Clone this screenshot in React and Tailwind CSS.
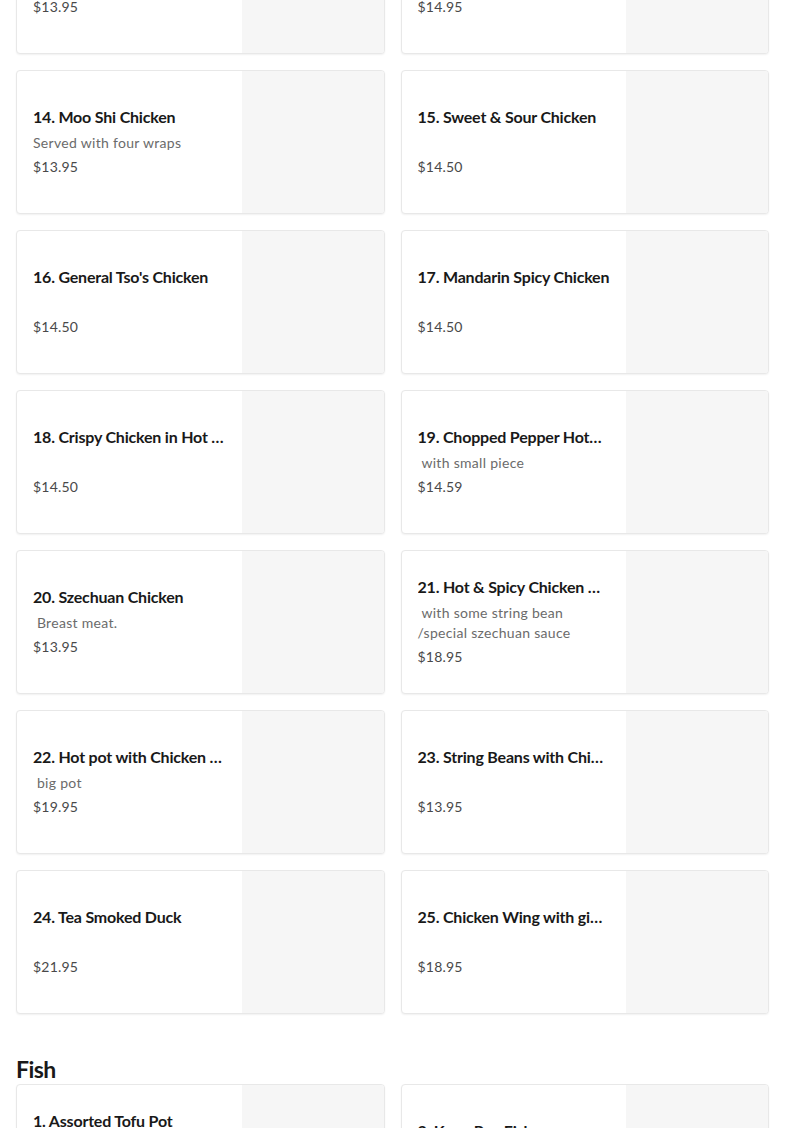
import React from 'react';

const sections = [
  {
    title: null,
    items: [
      { name: '12. Kung Pao Chicken', desc: '', price: '$13.95' },
      { name: '13. Chicken with Broccoli', desc: '', price: '$14.95' },
      { name: '14. Moo Shi Chicken', desc: 'Served with four wraps', price: '$13.95' },
      { name: '15. Sweet & Sour Chicken', desc: '', price: '$14.50' },
      { name: "16. General Tso's Chicken", desc: '', price: '$14.50' },
      { name: '17. Mandarin Spicy Chicken', desc: '', price: '$14.50' },
      { name: '18. Crispy Chicken in Hot Chili Sauce', desc: '', price: '$14.50' },
      { name: '19. Chopped Pepper Hotpot Chicken', desc: ' with small piece', price: '$14.59' },
      { name: '20. Szechuan Chicken', desc: ' Breast meat.', price: '$13.95' },
      { name: '21. Hot & Spicy Chicken Hotpot', desc: ' with some string bean\n/special szechuan sauce', price: '$18.95' },
      { name: '22. Hot pot with Chicken Gizzard', desc: ' big pot', price: '$19.95' },
      { name: '23. String Beans with Chicken', desc: '', price: '$13.95' },
      { name: '24. Tea Smoked Duck', desc: '', price: '$21.95' },
      { name: '25. Chicken Wing with ginger', desc: '', price: '$18.95' },
    ],
  },
  {
    title: 'Fish',
    items: [
      { name: '1. Assorted Tofu Pot', desc: ' with fish, shrimp\n/tofu and vegetables', price: '$19.95' },
      { name: '2. Kung Pao Fish', desc: '', price: '$17.95' },
    ],
  },
];

function ItemCard({ item }) {
  return (
    <div className="flex h-[144px] overflow-hidden rounded-[4px] border border-[#e8e8e8] bg-white shadow-[0_1px_2px_rgba(0,0,0,0.06)]">
      <div className="flex min-w-0 flex-1 items-center pb-[2px] pl-4 pr-4">
        <div className="min-w-0 w-full">
          <div className="truncate text-[16px] font-bold leading-6 tracking-[-0.2px] text-[#191919]">
            {item.name}
          </div>
          <div className="mt-1 min-h-[20px] whitespace-pre-wrap text-[14px] leading-5 tracking-[0.3px] text-[#6b6b6b]">
            {item.desc}
          </div>
          <div className="mt-1 text-[14px] leading-5 tracking-[0.2px] text-[#494949]">{item.price}</div>
        </div>
      </div>
      <div className="h-[142px] w-[142px] shrink-0 bg-[#f6f6f6]" />
    </div>
  );
}

export default function App() {
  return (
    <div className="h-[1128px] overflow-hidden bg-white font-['Lato',sans-serif]">
      <div className="-mt-[90px] px-4">
        {sections.map((section, i) => (
          <div key={i}>
            {section.title && (
              <h2 className="mb-px mt-[41px] text-[23px] font-bold leading-7 tracking-[-0.6px] text-[#191919]">
                {section.title}
              </h2>
            )}
            <div className="grid grid-cols-2 gap-4">
              {section.items.map((item) => (
                <ItemCard key={item.name} item={item} />
              ))}
            </div>
          </div>
        ))}
      </div>
    </div>
  );
}
